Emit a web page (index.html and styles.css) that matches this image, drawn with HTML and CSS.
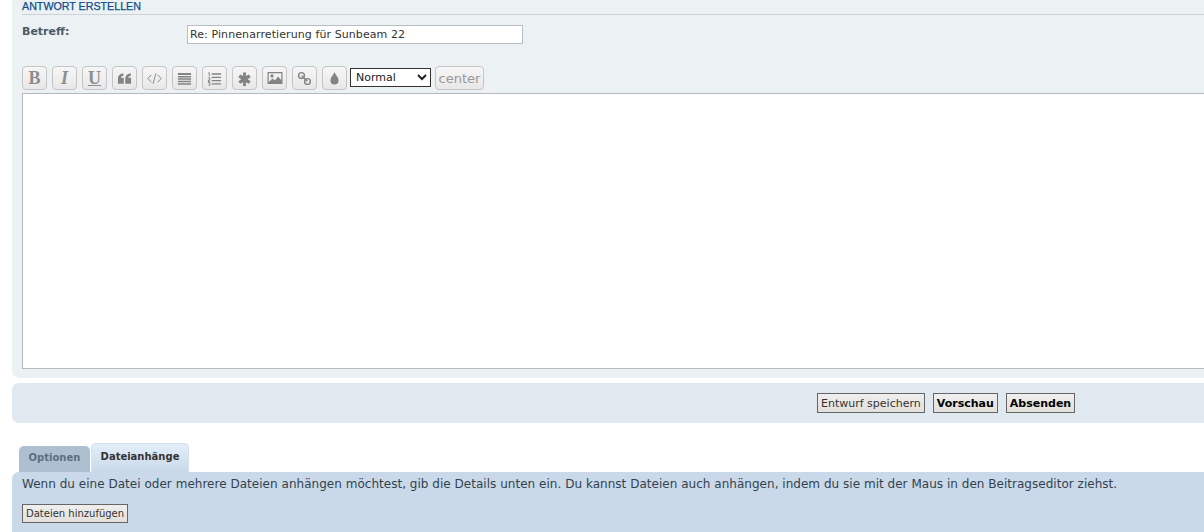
FILE: index.html
```html
<!DOCTYPE html>
<html lang="de">
<head>
<meta charset="utf-8">
<title>Antwort erstellen</title>
<link rel="stylesheet" href="styles.css">
</head>
<body>
<main class="page">
  <section class="panel">
    <h3 class="heading">ANTWORT ERSTELLEN</h3>
    <div class="subject-row">
      <label class="subject-label" for="subject">Betreff:</label>
      <input class="subject-input" id="subject" type="text" value="Re: Pinnenarretierung für Sunbeam 22">
    </div>
    <div class="toolbar">
      <button class="tool tool-b" type="button">B</button>
      <button class="tool tool-i" type="button">I</button>
      <button class="tool tool-u" type="button">U</button>
      <button class="tool" type="button"><svg class="icon" viewBox="0 0 16 16"><path d="M1 8.500C1 5.500 2.700 3.200 6.800 2.500v2.600C5 5.500 4.300 6.300 4.200 7.300H7.200v6.200H1zM8.800 8.500C8.800 5.500 10.500 3.200 14.700 2.500v2.600C12.800 5.500 12.100 6.300 12 7.300H15v6.200H8.800z"/></svg></button>
      <button class="tool" type="button"><svg class="icon" viewBox="0 0 16 16"><path class="line thin" d="M4.800 4 .8 8l4 4M11.200 4l4 4-4 4M9.500 2.500 6.500 13.500"/></svg></button>
      <button class="tool" type="button"><svg class="icon" viewBox="0 0 16 16"><path d="M1 2h14v2.200H1zM1 5.200h14v1.600H1zM1 7.800h14v1.600H1zM1 10.400h14V12H1zM1 13h14v1.600H1z"/></svg></button>
      <button class="tool" type="button"><svg class="icon" viewBox="0 0 16 16"><path d="M5 2.500h10V4H5zM5 6h10v1.500H5zM5 9.500h10V11H5zM5 13h10v1.500H5zM1 1.500h2v4H2V2.500H1zM1 7h2.500v3H2v1h1.500v.7H1V9.300h1.500v-1.500H1zM1 12h2.500v3.500H1v-.7h1.500v-.7H1.500v-.6h1v-.7H1z"/></svg></button>
      <button class="tool" type="button"><svg class="icon" viewBox="0 0 16 16"><path d="M6.300 1.500h3.400l-.3 3.800 3.400-1.600 1.700 2.900-3.100 2.100 3.100 2.100-1.700 2.900-3.400-1.600.3 3.800H6.300l.3-3.800-3.400 1.600-1.700-2.900 3.100-2.100-3.100-2.100 1.700-2.900 3.400 1.600z"/></svg></button>
      <button class="tool" type="button"><svg class="icon icon-wide" viewBox="0 0 16 16"><path fill-rule="evenodd" d="M.5 2h15v12H.5zM1.700 3.200v9.100l3.800-3.800 2.500 2 3-4 3.300 3.800V3.200zM5 4.300a1.600 1.600 0 1 1 0 3.200 1.600 1.600 0 0 1 0-3.200z"/></svg></button>
      <button class="tool" type="button"><svg class="icon" viewBox="0 0 16 16"><circle class="line" cx="4.800" cy="4.800" r="3.100"/><circle class="line" cx="11.200" cy="11.200" r="3.100"/><path class="line" d="M5 5l6 6"/></svg></button>
      <button class="tool" type="button"><svg class="icon" viewBox="0 0 16 16"><path d="M8 1c.9 2.900 4.300 5.400 4.300 9a4.300 4.300 0 0 1-8.600 0C3.700 6.400 7.100 3.900 8 1z"/></svg></button>
      <select class="size-select"><option>Normal</option></select>
      <button class="tool tool-text" type="button">center</button>
    </div>
    <textarea class="editor"></textarea>
  </section>

  <section class="submit-bar">
    <button class="action" type="button">Entwurf speichern</button>
    <button class="action action-strong" type="button">Vorschau</button>
    <button class="action action-strong" type="button">Absenden</button>
  </section>

  <nav class="tabs">
    <a class="tab">Optionen</a>
    <a class="tab tab-active">Dateianhänge</a>
  </nav>
  <section class="attach">
    <p class="attach-text">Wenn du eine Datei oder mehrere Dateien anhängen möchtest, gib die Details unten ein. Du kannst Dateien auch anhängen, indem du sie mit der Maus in den Beitragseditor ziehst.</p>
    <button class="action" type="button">Dateien hinzufügen</button>
  </section>
</main>
</body>
</html>
```

FILE: styles.css
```css
html, body {
  margin: 0;
  height: 532px;
  overflow: hidden;
  background: #fff;
}

.page {
  width: 1224px;
  padding-left: 12px;
  box-sizing: border-box;
  font-family: "DejaVu Sans", sans-serif;
  font-size: 11px;
  color: #333;
}

.panel {
  height: 378px;
  box-sizing: border-box;
  padding: 0 0 0 10px;
  background: #ecf1f3;
  border-bottom-left-radius: 7px;
}

.heading {
  margin: 0;
  height: 15px;
  box-sizing: border-box;
  border-bottom: 1px solid #ccd2d6;
  font-family: "Liberation Sans", sans-serif;
  font-size: 10.7px;
  font-weight: normal;
  line-height: 12px;
  color: #0f4d8a;
  -webkit-text-stroke: 0.25px #0f4d8a;
}

.subject-row {
  display: flex;
  align-items: flex-start;
  height: 47px;
  padding-top: 10px;
  box-sizing: border-box;
}

.subject-label {
  width: 165px;
  font-weight: bold;
  font-size: 11px;
  line-height: 14px;
  color: #4a5a66;
}

.subject-input {
  width: 336px;
  height: 19px;
  box-sizing: border-box;
  margin: 0;
  padding: 0 2px;
  border: 1px solid #b8bec2;
  background: #fff;
  font-family: "DejaVu Sans", sans-serif;
  font-size: 11px;
  letter-spacing: 0.09px;
  color: #333;
  outline: none;
}

.toolbar {
  display: flex;
  align-items: flex-start;
  gap: 5px;
  height: 31px;
  padding-top: 4px;
  box-sizing: border-box;
}

.tool {
  width: 25px;
  height: 24px;
  margin: 0;
  padding: 0;
  display: flex;
  align-items: center;
  justify-content: center;
  box-sizing: border-box;
  border: 1px solid #c7c5c2;
  border-radius: 4px;
  background: linear-gradient(#f6f6f6, #e8e8e8);
  color: #8d8d8d;
}

.tool-b, .tool-i, .tool-u {
  font-family: "Liberation Serif", serif;
  font-size: 18px;
  font-weight: bold;
}

.tool-i { font-style: italic; }
.tool-u { text-decoration: underline; }

.icon {
  width: 15px;
  height: 15px;
  fill: #838383;
}

.icon-wide {
  width: 16px;
  height: 16px;
}

.line {
  fill: none;
  stroke: #838383;
  stroke-width: 1.5;
}

.thin {
  stroke-width: 1;
}

.size-select {
  width: 81px;
  height: 19px;
  margin: 2px 0 0 -2px;
  padding-left: 1px;
  box-sizing: border-box;
  border: 1px solid #333;
  border-radius: 0;
  background: #fff;
  font-family: "DejaVu Sans", sans-serif;
  font-size: 11px;
  color: #222;
}

.tool-text {
  width: 49px;
  margin-left: -1px;
  font-family: "DejaVu Sans", sans-serif;
  font-size: 13px;
  color: #999;
}

.editor {
  display: block;
  width: 100%;
  height: 276px;
  box-sizing: border-box;
  margin: 0;
  padding: 0;
  resize: none;
  border: 1px solid #b4babd;
  background: #fff;
  outline: none;
}

.submit-bar {
  display: flex;
  align-items: center;
  gap: 8px;
  height: 40px;
  box-sizing: border-box;
  margin-top: 5px;
  padding-left: 805px;
  background: #e0e9f0;
  border-radius: 7px 0 0 7px;
}

.action {
  height: 20px;
  margin: 0;
  padding: 0 3px;
  box-sizing: border-box;
  border: 1px solid #666;
  border-radius: 0;
  background: linear-gradient(#efefef, #e3dfdb);
  font-family: "DejaVu Sans", sans-serif;
  font-size: 11px;
  color: #333;
  white-space: nowrap;
}

.action-strong {
  font-weight: bold;
  color: #000;
}

.tabs {
  display: flex;
  align-items: flex-end;
  gap: 1px;
  height: 49px;
  padding-left: 7px;
}

.tab {
  height: 26px;
  width: 71px;
  box-sizing: border-box;
  padding-top: 5px;
  text-align: center;
  background: #adc0d1;
  border-radius: 5px 5px 0 0;
  font-size: 10px;
  font-weight: bold;
  line-height: 14px;
  color: #5c6f80;
}

.tab-active {
  height: 29px;
  width: 98px;
  background: linear-gradient(#e3eef9, #c9d9e9);
  border: 1px solid #d3e2f0;
  border-bottom: 0;
  color: #333;
  padding-top: 6px;
}

.attach {
  height: 60px;
  box-sizing: border-box;
  padding: 4px 10px 0;
  background: #c9d9e9;
  border-top-left-radius: 7px;
}

.attach-text {
  margin: 0 0 12px;
  font-size: 12px;
  letter-spacing: 0.026px;
  line-height: 16px;
  color: #34424e;
}

.attach .action {
  height: 19px;
  font-size: 10px;
}
```
